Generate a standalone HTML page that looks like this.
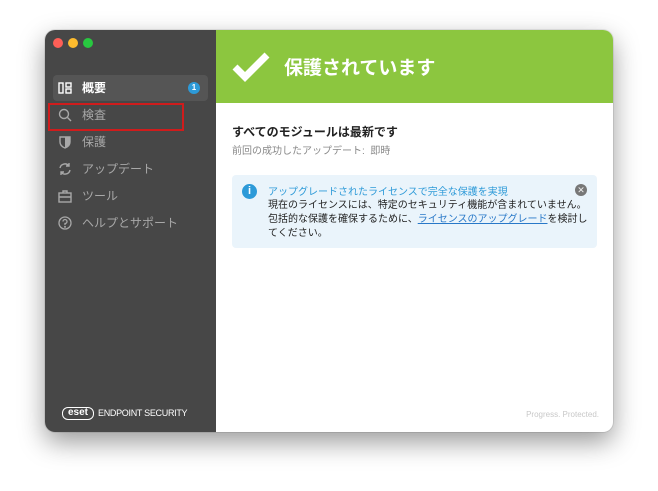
<!DOCTYPE html>
<html><head><meta charset="utf-8"><style>
*{margin:0;padding:0;box-sizing:border-box}
body{width:658px;height:491px;background:#fff;position:relative;overflow:hidden;font-family:"Liberation Sans","Noto Sans CJK JP",sans-serif}
.win{position:absolute;left:45px;top:30px;width:568px;height:402px;border-radius:10px;overflow:hidden;background:#fff;box-shadow:0 10px 26px rgba(0,0,0,.4),0 0 0 1px rgba(0,0,0,.08)}
.side{position:absolute;left:0;top:0;width:171px;height:402px;background:#474747}
.dot{position:absolute;top:8px;width:10px;height:10px;border-radius:50%}
.item{position:absolute;left:8px;width:155px;height:26px;color:#a8a8a8;font-size:12px;line-height:26px;padding-left:29px}
.item svg{position:absolute;left:5px;top:6px}
.main{position:absolute;left:171px;top:0;right:0;bottom:0}
.hdr{position:absolute;left:0;top:0;right:0;height:73px;background:#8cc63f}
.hdr h1{position:absolute;left:68px;top:23px;color:#fff;font-size:19px;font-weight:bold}
</style></head><body>
<div class="win">
<div class="side">
<div class="dot" style="left:8px;background:#fe5f57"></div>
<div class="dot" style="left:23px;background:#febc2e"></div>
<div class="dot" style="left:38px;background:#28c840"></div>
<div class="item" style="top:45px;background:#555;border-radius:4px;color:#fff;font-weight:bold">
<svg width="14" height="14" viewBox="0 0 14 14" fill="none" stroke="#fff" stroke-width="1.4"><rect x="1" y="2" width="4" height="10"/><rect x="8" y="2" width="5" height="4"/><rect x="8" y="8" width="5" height="4"/></svg>概要
<span style="position:absolute;right:8px;top:7px;width:12px;height:12px;border-radius:50%;background:#2d9ad8;color:#fff;font-size:8px;line-height:12px;text-align:center">1</span></div>
<div class="item" style="top:72px"><svg width="14" height="14" viewBox="0 0 14 14" fill="none" stroke="#a8a8a8" stroke-width="1.4"><circle cx="6" cy="6" r="4.5"/><path d="M9.5 9.5L13 13"/></svg>検査</div>
<div style="position:absolute;left:3px;top:73px;width:136px;height:28px;border:2px solid #d01c1c"></div>
<div class="item" style="top:99px"><svg width="14" height="14" viewBox="0 0 14 14"><path d="M2 2h10v5c0 3-2.5 5-5 6-2.5-1-5-3-5-6z" fill="none" stroke="#a8a8a8" stroke-width="1.4"/><path d="M7 2h5v5c0 3-2.5 5-5 6z" fill="#a8a8a8"/></svg>保護</div>
<div class="item" style="top:126px"><svg width="14" height="14" viewBox="0 0 14 14" fill="none" stroke="#a8a8a8" stroke-width="1.4"><path d="M2 6a5 5 0 0 1 9-2M12 8a5 5 0 0 1-9 2M11 1v3H8M3 13v-3h3"/></svg>アップデート</div>
<div class="item" style="top:153px"><svg width="14" height="14" viewBox="0 0 14 14" fill="none" stroke="#a8a8a8" stroke-width="1.4"><rect x="1" y="4" width="12" height="9"/><path d="M5 4V2h4v2M1 8h12"/></svg>ツール</div>
<div class="item" style="top:180px"><svg width="14" height="14" viewBox="0 0 14 14" fill="none" stroke="#a8a8a8" stroke-width="1.3"><circle cx="7" cy="7" r="6"/><path d="M5 5.5a2 2 0 1 1 2 2v1.5"/><circle cx="7" cy="10.8" r=".4"/></svg>ヘルプとサポート</div>
<div style="position:absolute;left:17px;top:377px;width:32px;height:13px;border:1.5px solid #fff;border-radius:6px;color:#fff;font-size:10px;font-weight:bold;line-height:10px;text-align:center">eset</div>
<div style="position:absolute;left:53px;top:378px;color:#fff;font-size:9px;letter-spacing:-.3px">ENDPOINT SECURITY</div>
</div>
<div class="main">
<div class="hdr"><svg style="position:absolute;left:16px;top:22px" width="38" height="30" viewBox="0 0 38 30"><path d="M3 15l10 10L35 3" fill="none" stroke="#fff" stroke-width="7"/></svg><h1>保護されています</h1></div>
<div style="position:absolute;left:16px;top:93px;font-size:12px;font-weight:bold;color:#222">すべてのモジュールは最新です</div>
<div style="position:absolute;left:16px;top:112px;font-size:10px;color:#888">前回の成功したアップデート:&nbsp;&nbsp;即時</div>
<div style="position:absolute;left:16px;top:145px;width:365px;height:73px;background:#eaf4fb;border-radius:4px">
<div style="position:absolute;left:10px;top:9px;width:15px;height:15px;border-radius:50%;background:#2d9ad8;color:#fff;font-size:11px;font-weight:bold;text-align:center;line-height:15px">i</div>
<div style="position:absolute;left:36px;top:8px;font-size:10px;color:#2d9ad8">アップグレードされたライセンスで完全な保護を実現</div>
<div style="position:absolute;left:36px;top:24px;font-size:10px;line-height:14px;color:#222;width:320px">現在のライセンスには、特定のセキュリティ機能が含まれていません。包括的な保護を確保するために、<span style="color:#2878c8;text-decoration:underline">ライセンスのアップグレード</span>を検討してください。</div>
<div style="position:absolute;right:10px;top:9px;width:12px;height:12px;border-radius:50%;background:#777;color:#eee;font-size:9px;line-height:12px;text-align:center">✕</div>
</div>
<div style="position:absolute;right:14px;top:380px;font-size:8px;color:#c8c8c8">Progress. Protected.</div>
</div>
</div>
</body></html>
